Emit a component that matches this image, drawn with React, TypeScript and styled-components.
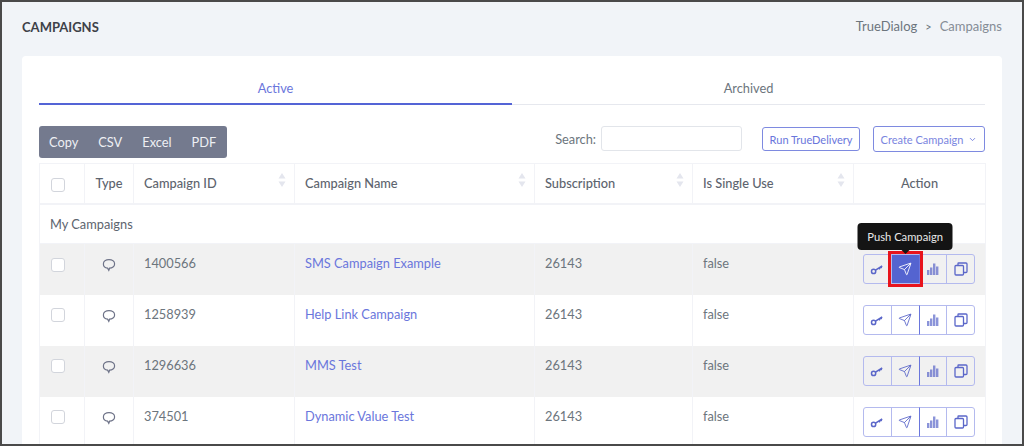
import React from "react";
import styled, { createGlobalStyle } from "styled-components";
import { ChevronDown, Send } from "lucide-react";

const GlobalStyle = createGlobalStyle`
  html, body {
    margin: 0;
    padding: 0;
    background: #f1f4f8;
  }
  * {
    box-sizing: border-box;
  }
`;

const rows = [
  { id: "1400566", name: "SMS Campaign Example", active: true },
  { id: "1258939", name: "Help Link Campaign" },
  { id: "1296636", name: "MMS Test" },
  { id: "374501", name: "Dynamic Value Test" },
];

const Bubble = () => (
  <svg width="14" height="14" viewBox="0 0 14 14" fill="none" stroke="#6e7388" strokeWidth="1.2">
    <path d="M7 1.600c3.200 0 5.600 1.800 5.600 4.300S10.200 10.200 7.600 10.200L6.800 12.300 5.600 10.100C3 9.800 1.400 8.200 1.400 5.900 1.400 3.400 3.800 1.600 7 1.600Z" />
  </svg>
);

const KeyIcon = () => (
  <svg width="14" height="14" viewBox="0 0 14 14" fill="none" stroke="currentColor" strokeWidth="1.5">
    <circle cx="3.600" cy="9.400" r="2.100" />
    <path d="M5.500 8.100L12.200 4M9 5.900l1 1.300M10.800 4.900l.8 1.200" />
  </svg>
);

const Bars = () => (
  <svg width="14" height="14" viewBox="0 0 14 14" fill="#5b67c9" opacity="0.7">
    <rect x="1" y="8" width="2.400" height="5" />
    <rect x="4" y="5.500" width="2.400" height="7.500" />
    <rect x="7" y="1.500" width="2.400" height="11.500" />
    <rect x="10" y="4.500" width="2.400" height="8.500" />
  </svg>
);

const CopyIcon = () => (
  <svg width="14" height="14" viewBox="0 0 14 14" fill="none" stroke="#5b67c9" strokeWidth="1.3">
    <rect x="1" y="3.500" width="8.500" height="9.500" rx="1" />
    <path d="M4 3.500V1.500a.5.5 0 0 1 .5-.5h7.500a1 1 0 0 1 1 1v7.500a1 1 0 0 1-1 1H9.500" />
  </svg>
);

const SortArrows = () => (
  <Sort>
    <svg width="8" height="16" viewBox="0 0 8 16" fill="#e4e6ee">
      <path d="M4 1l3.500 5.500H.5zM4 15L.5 9.500h7z" />
    </svg>
  </Sort>
);

const App = () => {
  return (
    <Frame>
      <GlobalStyle />
      <TopBar>
        <Title>CAMPAIGNS</Title>
        <Crumbs>
          <span>TrueDialog</span>
          <CrumbSep>&gt;</CrumbSep>
          <CrumbLast>Campaigns</CrumbLast>
        </Crumbs>
      </TopBar>
      <Card>
        <Tabs>
          <Tab $active>Active</Tab>
          <Tab>Archived</Tab>
        </Tabs>
        <Toolbar>
          <ExportGroup>
            <ExportButton>Copy</ExportButton>
            <ExportButton>CSV</ExportButton>
            <ExportButton>Excel</ExportButton>
            <ExportButton>PDF</ExportButton>
          </ExportGroup>
          <ToolbarRight>
            <SearchLabel>
              Search:
              <SearchInput />
            </SearchLabel>
            <OutlineButton>Run TrueDelivery</OutlineButton>
            <CreateButton>
              Create Campaign
              <ChevronDown size={9} strokeWidth={2.5} />
            </CreateButton>
          </ToolbarRight>
        </Toolbar>
        <Table>
          <colgroup>
            <col width="45" />
            <col width="49" />
            <col width="161" />
            <col width="240" />
            <col width="158" />
            <col width="161" />
            <col width="132" />
          </colgroup>
          <thead>
            <tr>
              <Th><Check /></Th>
              <Th $center>Type</Th>
              <Th>Campaign ID<SortArrows /></Th>
              <Th>Campaign Name<SortArrows /></Th>
              <Th>Subscription<SortArrows /></Th>
              <Th>Is Single Use<SortArrows /></Th>
              <Th $center>Action</Th>
            </tr>
          </thead>
          <tbody>
            <tr>
              <GroupCell colSpan={7}>My Campaigns</GroupCell>
            </tr>
            {rows.map((row) => (
              <Row key={row.id} $shaded={rows.indexOf(row) % 2 === 0}>
                <Td><Check /></Td>
                <Td $center><IconSlot><Bubble /></IconSlot></Td>
                <Td>{row.id}</Td>
                <Td><NameLink>{row.name}</NameLink></Td>
                <Td>26143</Td>
                <Td>false</Td>
                <ActionCell>
                  <ActionGroup>
                    <ActionButton><KeyIcon /></ActionButton>
                    <ActionButton $active={row.active}>
                      <Send size={14} strokeWidth={1.5} />
                      {row.active && (
                        <>
                          <Highlight />
                          <Tooltip>Push Campaign</Tooltip>
                        </>
                      )}
                    </ActionButton>
                    <ActionButton><Bars /></ActionButton>
                    <ActionButton><CopyIcon /></ActionButton>
                  </ActionGroup>
                </ActionCell>
              </Row>
            ))}
          </tbody>
        </Table>
      </Card>
    </Frame>
  );
};

export default App;

const Frame = styled.div`
  width: 1024px;
  height: 446px;
  border: 2px solid #4a4a4a;
  background: #f1f4f8;
  overflow: hidden;
  padding: 0 20px;
  font-family: "Lato", "Open Sans", sans-serif;
  font-size: 12.8px;
  color: #6c757d;
`;

const TopBar = styled.div`
  height: 54px;
  display: flex;
  align-items: center;
  justify-content: space-between;
  padding-bottom: 6px;
`;

const Title = styled.h1`
  margin: 1px 0 0;
  font-size: 13px;
  font-weight: 700;
  color: #3d4148;
`;

const Crumbs = styled.div`
  display: flex;
  align-items: center;
  font-size: 13px;
  color: #6c757d;
`;

const CrumbSep = styled.span`
  margin: 0 8px;
  font-size: 11px;
`;

const CrumbLast = styled.span`
  color: #858c96;
`;

const Card = styled.div`
  background: #fff;
  border-radius: 4px;
  padding: 16px 17px 0;
  height: 500px;
`;

const Tabs = styled.div`
  display: flex;
  height: 33px;
  border-bottom: 1px solid #e6e8ee;
`;

const Tab = styled.div<{ $active?: boolean }>`
  flex: 1;
  height: 33px;
  display: flex;
  align-items: center;
  justify-content: center;
  padding-bottom: ${(p) => (p.$active ? "0" : "2px")};
  color: ${(p) => (p.$active ? "#6a76dc" : "#6c757d")};
  border-bottom: ${(p) => (p.$active ? "2px solid #5464d6" : "none")};
`;

const Toolbar = styled.div`
  display: flex;
  justify-content: space-between;
  align-items: flex-start;
  height: 32px;
  margin-top: 21px;
  margin-bottom: 5px;
`;

const ExportGroup = styled.div`
  display: flex;
  align-items: center;
  gap: 20px;
  height: 32px;
  width: 188px;
  padding: 0 10px;
  background: #747a8e;
  border-radius: 3px;
`;

const ExportButton = styled.button`
  border: 0;
  background: transparent;
  color: #eef0f4;
  font: inherit;
  padding: 0;
`;

const ToolbarRight = styled.div`
  display: flex;
  align-items: center;
  height: 26px;
`;

const SearchLabel = styled.label`
  display: flex;
  align-items: center;
  gap: 5px;
  color: #6c757d;
`;

const SearchInput = styled.input`
  width: 141px;
  height: 25px;
  margin-top: -1px;
  border: 1px solid #e2e5ea;
  border-radius: 3px;
  background: #fff;
`;

const OutlineButton = styled.button`
  margin-left: 20px;
  height: 24px;
  width: 98px;
  padding: 0;
  border: 1px solid #7e8ae0;
  border-radius: 3px;
  background: #fff;
  color: #6a76dc;
  font: inherit;
  font-size: 11px;
`;

const CreateButton = styled(OutlineButton)`
  margin-left: 13px;
  height: 26px;
  width: 112px;
  display: flex;
  align-items: center;
  justify-content: center;
  gap: 5px;
  color: #7a85e0;
`;

const Table = styled.table`
  width: 946px;
  table-layout: fixed;
  border-collapse: collapse;
`;

const Th = styled.th<{ $center?: boolean }>`
  position: relative;
  height: 40px;
  padding: 0 10px;
  font-weight: 500;
  font-size: 12.8px;
  color: #5d646e;
  text-align: ${(p) => (p.$center ? "center" : "left")};
  border: 1px solid #f2f3f7;
  border-bottom-width: 2px;
`;

const Sort = styled.span`
  position: absolute;
  right: 8px;
  top: 8px;
`;

const GroupCell = styled.td`
  height: 40px;
  padding: 0 10px;
  color: #5d646e;
  border: 1px solid #f2f3f7;
`;

const Row = styled.tr<{ $shaded?: boolean }>`
  background: ${(p) => (p.$shaded ? "#f1f1f1" : "#fff")};
`;

const Td = styled.td<{ $center?: boolean }>`
  height: 51px;
  padding: 0 10px 12px;
  color: #6c757d;
  text-align: ${(p) => (p.$center ? "center" : "left")};
  border: 1px solid #f2f3f7;
  border-width: 0 1px;
`;

const IconSlot = styled.span`
  display: inline-flex;
  position: relative;
  top: 3px;
`;

const NameLink = styled.a`
  color: #6a76dc;
`;

const Check = styled.span`
  display: inline-block;
  width: 14px;
  height: 14px;
  margin-left: 1px;
  vertical-align: middle;
  background: #fff;
  border: 1px solid #d2d5dc;
  border-radius: 3px;
`;

const ActionCell = styled.td`
  height: 51px;
  padding: 0 0 0 9px;
  border: 1px solid #f2f3f7;
  border-width: 0 1px;
`;

const ActionGroup = styled.div`
  display: inline-flex;
  vertical-align: middle;
`;

const ActionButton = styled.button<{ $active?: boolean }>`
  position: relative;
  width: 28.75px;
  height: 30px;
  margin-left: -1px;
  display: flex;
  align-items: center;
  justify-content: center;
  padding: 0;
  border: 1px solid #b4baee;
  color: ${(p) => (p.$active ? "#fff" : "#5b67c9")};
  background: ${(p) => (p.$active ? "#5464d0" : "transparent")};
  &:first-child {
    margin-left: 0;
    border-radius: 3px 0 0 3px;
  }
  &:nth-child(2) {
    border-right-color: #6a76dc;
    z-index: 1;
  }
  &:last-child {
    border-radius: 0 3px 3px 0;
  }
`;

const Highlight = styled.span`
  position: absolute;
  inset: -4px -4px -4px -4px;
  border: 3px solid #e8141c;
`;

const Tooltip = styled.span`
  position: absolute;
  left: 50%;
  bottom: 100%;
  margin-bottom: 5px;
  transform: translateX(-50%);
  width: 95px;
  height: 27px;
  display: flex;
  align-items: center;
  justify-content: center;
  background: #141414;
  border-radius: 4px;
  color: #e9e9e9;
  font-family: "Lato", sans-serif;
  font-size: 11.2px;
  white-space: nowrap;
  &::after {
    content: "";
    position: absolute;
    left: 50%;
    top: 100%;
    margin-left: -4px;
    border: 4px solid transparent;
    border-top-color: #141414;
    border-bottom-width: 0;
  }
`;
